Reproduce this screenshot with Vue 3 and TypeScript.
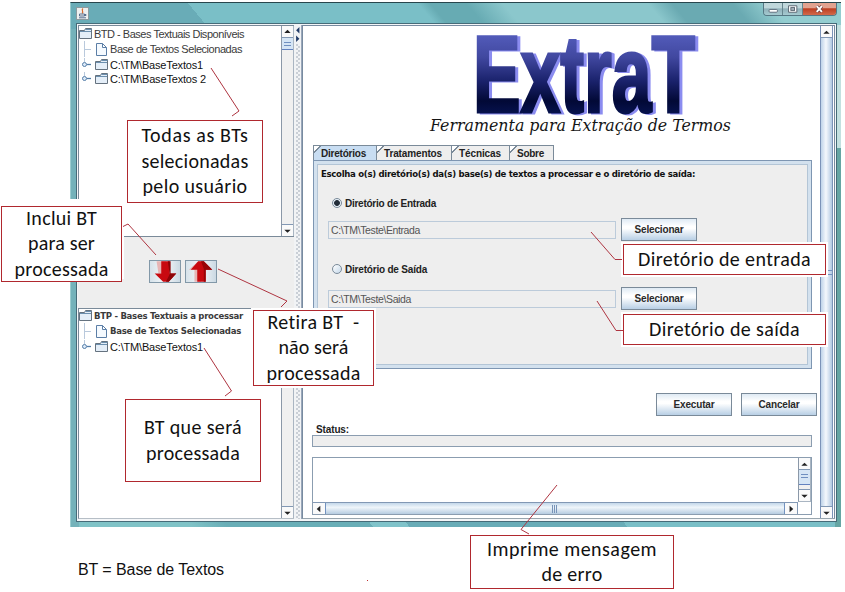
<script setup lang="ts">
interface TreeRow {
  text: string
  kind: 'root' | 'file' | 'folder'
  width: number
}
interface Callout {
  id: string
  lines: { text: string; width: number }[]
}

const available: TreeRow[] = [
  { text: 'BTD - Bases Textuais Disponíveis', kind: 'root', width: 150 },
  { text: 'Base de Textos Selecionadas', kind: 'file', width: 132 },
  { text: 'C:\\TM\\BaseTextos1', kind: 'folder', width: 93 },
  { text: 'C:\\TM\\BaseTextos 2', kind: 'folder', width: 96 },
]
const processing: TreeRow[] = [
  { text: 'BTP - Bases Textuais a processar', kind: 'root', width: 149 },
  { text: 'Base de Textos Selecionadas', kind: 'file', width: 131 },
  { text: 'C:\\TM\\BaseTextos1', kind: 'folder', width: 93 },
]
const trees = [
  { id: 'btd', rows: available },
  { id: 'btp', rows: processing },
]
const tabs = [
  { text: 'Diretórios', width: 45, id: 'dir' },
  { text: 'Tratamentos', width: 58, id: 'trat' },
  { text: 'Técnicas', width: 42, id: 'tec' },
  { text: 'Sobre', width: 27, id: 'sob' },
]
const fields = [
  { label: 'Diretório de Entrada', width: 91, value: 'C:\\TM\\Teste\\Entrada', valueWidth: 89, on: true },
  { label: 'Diretório de Saída', width: 82, value: 'C:\\TM\\Teste\\Saida', valueWidth: 80, on: false },
]
const callouts: Callout[] = [
  { id: 'all', lines: [{ text: 'Todas as BTs', width: 107 }, { text: 'selecionadas', width: 107 }, { text: 'pelo usuário', width: 105 }] },
  { id: 'include', lines: [{ text: 'Inclui BT', width: 71 }, { text: 'para ser', width: 67 }, { text: 'processada', width: 94 }] },
  { id: 'remove', lines: [{ text: 'Retira BT  -', width: 92 }, { text: 'não será', width: 70 }, { text: 'processada', width: 94 }] },
  { id: 'processed', lines: [{ text: 'BT que será', width: 98 }, { text: 'processada', width: 94 }] },
  { id: 'source', lines: [{ text: 'Diretório de entrada', width: 173 }] },
  { id: 'output', lines: [{ text: 'Diretório de saída', width: 151 }] },
  { id: 'error', lines: [{ text: 'Imprime mensagem', width: 170 }, { text: 'de erro', width: 61 }] },
]

// Tracks a label so that it fills the given width in pixels.
const vFit = {
  mounted(el: HTMLElement, binding: { value: number }) {
    const natural = el.getBoundingClientRect().width
    const count = (el.textContent ?? '').length
    el.style.letterSpacing = `${((binding.value - natural) / count).toFixed(3)}px`
  },
}
</script>

<template>
  <div class="page">
    <div class="window">
      <header class="titlebar">
        <svg class="java" viewBox="0 0 13 13">
          <rect x=".5" y=".5" width="12" height="12" fill="#eef0f0" stroke="#8b9a9e" />
          <path d="M7 1.5C4.5 3.5 8.5 4.5 6 6.5" fill="none" stroke="#d8682a" stroke-width="1.2" />
          <path d="M3.5 7h5v2h-5zM8.5 7.5h1.5v1H8M3 10.8h7" fill="none" stroke="#5a7090" />
        </svg>
        <div class="controls">
          <span class="ctl"><svg viewBox="0 0 20 12"><rect x="5.5" y="6.5" width="9" height="3" rx="1" fill="#fff" stroke="#5a6a78" /></svg></span>
          <span class="ctl"><svg viewBox="0 0 20 12"><path d="M6 2.5h9v7H6z" fill="#fff" stroke="#56626e" /><rect x="8.5" y="4.5" width="4" height="3" fill="#aab6be" stroke="#56626e" /></svg></span>
          <span class="ctl close"><svg viewBox="0 0 35 12"><path d="M14.5 3l5.5 6M20 3l-5.5 6" stroke="#704040" stroke-width="3.4" /><path d="M14.5 3l5.5 6M20 3l-5.5 6" stroke="#fff" stroke-width="2" /></svg></span>
        </div>
      </header>
      <div class="content">
        <aside class="left">
          <template v-for="tree in trees" :key="tree.id">
            <section class="treebox" :class="tree.id">
              <div class="rows">
                <div v-for="(row, i) in tree.rows" :key="i" class="row" :class="row.kind">
                  <svg v-if="row.kind === 'root'" class="icon" viewBox="0 0 14 13">
                    <path d="M.5 11.5v-8h5l1-2h6v10z" fill="#e4eef8" stroke="#65727f" /><path d="M6.5 2.5h6M1 4.5h11" stroke="#6b8fae" />
                  </svg>
                  <svg v-else-if="row.kind === 'file'" class="icon" viewBox="0 0 31 16">
                    <path d="M5.5 0v16M6 8.500h6" stroke="#b9c9dc" fill="none" /><path d="M17.500 2.500h6l4 4v8h-10zM23.500 2.500v4h4" fill="#f5faff" stroke="#5b7ea6" />
                  </svg>
                  <svg v-else class="icon" viewBox="0 0 31 14">
                    <path d="M5.500 0v4" stroke="#b9c9dc" /><circle cx="5.500" cy="6.500" r="2" fill="#dceaf8" stroke="#547da8" /><path d="M8 6.500h4" stroke="#547da8" stroke-width="1.300" />
                    <path d="M16.500 11.500v-8h5l1-2h6v10z" fill="#e4eef8" stroke="#65727f" /><path d="M22.500 2.500h6M17 4.500h11" stroke="#6b8fae" />
                  </svg>
                  <span v-fit="row.width" class="label">{{ row.text }}</span>
                </div>
              </div>
              <div class="vbar">
                <span class="cap"><svg viewBox="0 0 12 12"><path d="M2.500 7L6 3.500 9.500 7z" /></svg></span>
                <span class="grip" />
                <span class="track" />
                <span class="cap down"><svg viewBox="0 0 12 12"><path d="M2.500 4.500h7L6 8z" /></svg></span>
              </div>
            </section>
            <div v-if="tree.id === 'btd'" class="moves">
              <button class="move"><svg viewBox="0 0 32 22"><path d="M7 0h10v13h-8z" fill="#e7b5b5" /><path d="M12 0h9v13h7l-8 9h-6L5 13h7z" fill="#c80a10" /><path d="M19 0h3v13h6l-8 9h-3l4-8z" fill="#8d0508" /></svg></button>
              <button class="move"><svg viewBox="0 0 32 22"><path d="M9 22V9H3L13 0h3v22z" fill="#e7b5b5" /><path d="M12 22V9H5l8-9h6l9 9h-7v13z" fill="#c80a10" /><path d="M19 22V8l-3-8h3l9 9h-7v13z" fill="#970508" /></svg></button>
            </div>
          </template>
        </aside>
        <div class="divider">
          <svg viewBox="0 0 8 20"><path d="M5.500 2v7L2 5.500zM2 11v7l3.500-3.500z" fill="#223c68" /></svg>
          <div class="dots" />
        </div>
        <main class="right">
          <div class="scene">
            <svg class="brand" viewBox="0 0 420 119">
              <defs>
                <linearGradient id="ink" gradientUnits="userSpaceOnUse" x1="0" y1="7" x2="0" y2="87">
                  <stop offset="0" stop-color="#545dbc" /><stop offset=".3" stop-color="#4148a0" /><stop offset=".6" stop-color="#1a226c" /><stop offset=".85" stop-color="#020936" /><stop offset="1" stop-color="#06114c" />
                </linearGradient>
              </defs>
              <text class="logo" x="67" y="86" textLength="222" lengthAdjust="spacingAndGlyphs">ExtraT</text>
              <text class="tag" x="24" y="105" textLength="301" lengthAdjust="spacingAndGlyphs">Ferramenta para Extração de Termos</text>
            </svg>
            <nav class="tabs">
              <span v-for="tab in tabs" :key="tab.id" class="tab" :class="tab.id">
                <b v-fit="tab.width">{{ tab.text }}</b>
              </span>
            </nav>
            <section class="panel">
              <div class="inner">
                <p class="intro"><span v-fit="374">Escolha o(s) diretório(s) da(s) base(s) de textos a processar e o diretório de saída:</span></p>
                <div v-for="field in fields" :key="field.label" class="field">
                  <div class="choice"><i class="radio" :class="{ on: field.on }" /><b v-fit="field.width">{{ field.label }}</b></div>
                  <div class="entry">
                    <div class="input"><span v-fit="field.valueWidth">{{ field.value }}</span></div>
                    <button class="btn"><b v-fit="49">Selecionar</b></button>
                  </div>
                </div>
              </div>
            </section>
            <div class="actions">
              <button class="btn"><b v-fit="41">Executar</b></button>
              <button class="btn"><b v-fit="41">Cancelar</b></button>
            </div>
            <div class="status"><b v-fit="33">Status:</b></div>
            <div class="progress" />
            <div class="log">
              <div class="blank" />
              <div class="vbar short">
                <span class="cap"><svg viewBox="0 0 12 12"><path d="M2.500 8L6 4.500 9.500 8z" /></svg></span>
                <span class="grip" />
                <span class="track" />
                <span class="cap down"><svg viewBox="0 0 12 12"><path d="M2.500 4.500h7L6 8z" /></svg></span>
              </div>
              <div class="hbar">
                <span class="cap"><svg viewBox="0 0 12 12"><path d="M8 2.500v7L4 6z" /></svg></span>
                <span class="slide"><svg viewBox="0 0 8 8"><path d="M1.500 0v8M3.500 0v8M5.500 0v8" stroke="#7894b8" /></svg></span>
                <span class="cap"><svg viewBox="0 0 12 12"><path d="M5 2.500v7L9 6z" /></svg></span>
              </div>
            </div>
          </div>
          <div class="vbar tall">
            <span class="cap"><svg viewBox="0 0 12 12"><path d="M2.500 8L6 4.500 9.500 8z" /></svg></span>
            <span class="thumb"><i /></span>
            <span class="cap down"><svg viewBox="0 0 12 12"><path d="M2.500 4.500h7L6 8z" /></svg></span>
          </div>
        </main>
      </div>
    </div>
    <p class="note"><span v-fit="146">BT = Base de Textos</span></p>

    <div v-for="c in callouts" :key="c.id" class="callout" :class="c.id">
      <span v-for="line in c.lines" :key="line.text" v-fit="line.width">{{ line.text }}</span>
    </div>
    <svg class="leaders" viewBox="0 0 845 592">
      <g fill="none" stroke="#ae3440" stroke-width="1">
        <path d="M211 68L239 111 232 116" />
        <path d="M123 226.500L128 224 156 255" />
        <path d="M218 269L287 301 281 307" />
        <path d="M204 348L231.500 391 225 396" />
        <path d="M591 232L615 259.500H622" />
        <path d="M597 301L616 330.500H623" />
        <path d="M557 485L521 529.500 529 534" />
      </g>
      <rect x="367" y="580" width="1" height="1" fill="#c03030" />
    </svg>
  </div>
</template>

<style>
body {
  margin: 0;
  background: #fff;
}
</style>

<style scoped>
* {
  box-sizing: border-box;
}
.page {
  position: relative;
  width: 845px;
  height: 592px;
  padding: 2px 0 0 70px;
  overflow: hidden;
  background: #fff;
  font-family: "Liberation Sans", sans-serif;
  font-size: 11px;
  color: #222;
}
.page span,
.page b {
  white-space: pre;
}
button {
  padding: 0;
  font: inherit;
  color: inherit;
}
.window {
  width: 771px;
  height: 525px;
  padding: 0 4px 5px 5px;
  display: flex;
  flex-direction: column;
  border-top: 1px solid #28464d;
  border-left: 1px solid #9ccdd0;
  background:
    linear-gradient(180deg, transparent 145px, #65a5a3 145px) right top / 6px 100% no-repeat,
    linear-gradient(180deg, #c3e0e0, #c3e0e0) right 22px / 6px 100% no-repeat,
    linear-gradient(#74b2ba, #74b2ba) left 26px / 8px 100% no-repeat,
    linear-gradient(50deg, #80c3c7 0 10%, #69aeb7 13% 25%, #80c3ca 25% 28%, #69acb7 28% 46%, #7abfc7 46% 65%, #67abb3 66% 69%, #8bc7cc 72% 84%, #6aaab2 86% 91%, #93cdd0 94%);
}
.titlebar {
  height: 20px;
  display: flex;
  justify-content: space-between;
}
.java {
  width: 13px;
  height: 13px;
  margin-top: 4px;
}
.controls {
  width: 74px;
  height: 13px;
  display: flex;
  border: 1px solid #557783;
  border-top: 0;
  border-radius: 0 0 4px 4px;
  overflow: hidden;
}
.ctl {
  width: 20px;
  border-right: 1px solid #65858d;
  background: linear-gradient(#bfd7db 0 42%, #8fb0b9 48%, #a5cad0);
}
.ctl svg {
  display: block;
  width: 100%;
  height: 12px;
}
.close {
  width: 34px;
  border: 0;
  background: linear-gradient(#e2a28f 0 40%, #bc3f22 48%, #d2694a);
}
.content {
  flex: 1;
  min-height: 0;
  display: flex;
  padding: 1px 1px 2px;
  border: 1px solid #466b78;
  background: #f4f6f8;
}
.left {
  width: 216px;
  display: flex;
  flex-direction: column;
  background: #eee;
}
.treebox {
  display: flex;
  justify-content: space-between;
  background: #fff;
  border: 1px solid #7a8a99;
  border-right: 0;
}
.btd {
  height: 212px;
}
.btp {
  flex: 1;
  border-bottom-color: #b6bec6;
}
.btp .rows {
  margin-top: -1px;
}
.row {
  height: 15px;
  display: flex;
  align-items: center;
  color: #3b3b3b;
}
.row .icon {
  flex: none;
  width: 31px;
  height: 16px;
}
.root .icon {
  width: 14px;
  height: 13px;
  margin-right: 1px;
}
.folder {
  color: #111;
}
.folder .icon {
  height: 14px;
}
.btd .folder {
  height: 14px;
}
.btd .folder:nth-child(3) {
  margin-top: 2px;
}
.btp .folder {
  margin-top: 1px;
}
.btp .root .label,
.btp .file .label {
  font-family: "DejaVu Sans Condensed", "DejaVu Sans", sans-serif;
  font-stretch: condensed;
  font-weight: bold;
  font-size: 9.5px;
}
.vbar {
  width: 13px;
  display: flex;
  flex-direction: column;
  border-left: 1px solid #8b98a8;
  border-right: 1px solid #a9b5c2;
  background: #f0f0f0;
}
.cap {
  flex: none;
  height: 12px;
  background: #fafafa;
  border-bottom: 1px solid #8298b4;
}
.cap svg {
  display: block;
  width: 11px;
  height: 12px;
  fill: #222;
}
.cap.down {
  border-bottom: 0;
  border-top: 1px solid #8298b4;
}
.grip {
  height: 12px;
  border-bottom: 1px solid #6382bf;
  background:
    linear-gradient(#6f8fc0, #6f8fc0) center 4px / 7px 1px no-repeat,
    linear-gradient(#6f8fc0, #6f8fc0) center 7px / 7px 1px no-repeat,
    #d5e5f5;
}
.btp .grip {
  display: none;
}
.track {
  flex: 1;
}
.moves {
  height: 71px;
  padding: 23px 0 0 71px;
  display: flex;
  gap: 4px;
}
.move {
  width: 32px;
  height: 23px;
  border: 1px solid #8298a8;
  background: linear-gradient(90deg, #d6e2ea, #f5f8fa 50%, #cbd9e3);
}
.move svg {
  display: block;
  width: 30px;
  height: 21px;
}
.divider {
  width: 8px;
  display: flex;
  flex-direction: column;
  border-right: 1px solid #9aa7ba;
  background: #f1f3f5;
}
.divider svg {
  height: 19px;
  width: 8px;
}
.dots {
  flex: 1;
  margin: 0 1px 0 2px;
  background:
    radial-gradient(circle at 1px 1px, #b4bbc6 0.6px, transparent 0.9px) 0 0 / 4px 4px,
    radial-gradient(circle at 3px 3px, #b4bbc6 0.6px, transparent 0.9px) 0 0 / 4px 4px;
}
.right {
  flex: 1;
  display: flex;
  justify-content: space-between;
  padding-right: 1px;
  border: 1px solid #788ba0;
  border-bottom-color: #98a5ae;
  background: #fff;
}
.scene {
  width: 510px;
  padding-left: 10px;
  display: flex;
  flex-direction: column;
}
.brand {
  flex: none;
  width: 420px;
  height: 119px;
  margin-left: 93px;
  overflow: visible;
}
.logo {
  font: bold 109px "Liberation Sans", sans-serif;
  fill: url(#ink);
  stroke: url(#ink);
  stroke-width: 3px;
  filter: drop-shadow(3px 1px 0 #8b8cf0);
}
.tag {
  font: italic 17px "DejaVu Serif Condensed", "DejaVu Serif", serif;
  fill: #151515;
}
.tabs {
  display: flex;
  height: 15px;
  flex: none;
}
.tab {
  height: 15px;
  padding-left: 7px;
  line-height: 16px;
  font-size: 10px;
  border: 1px solid #7a8a99;
  border-left: 0;
  border-bottom: 0;
  background: linear-gradient(135deg, #fff 0 4px, #7a8a99 4px 5px, #eee 5px);
}
.dir {
  width: 64px;
  padding-left: 7px;
  border-left: 1px solid #7a8a99;
  background: linear-gradient(135deg, #fff 0 4px, #7a8a99 4px 5px, #c8ddf2 5px);
}
.trat {
  width: 75px;
}
.tec {
  width: 58px;
}
.sob {
  width: 44px;
}
.panel {
  flex: none;
  width: 499px;
  height: 209px;
  padding: 3px;
  border: 1px solid #7e96b2;
  background: #d3e1ee;
}
.inner {
  height: 100%;
  border: 1px solid #b3c5d6;
  background: #eee;
}
.intro {
  height: 18px;
  margin: 0 0 0 3px;
  font: bold 9.500px/18px "DejaVu Sans Condensed", "DejaVu Sans", sans-serif;
  font-stretch: condensed;
  color: #111;
}
.field {
  height: 69px;
  padding: 12px 0 0 10px;
}
.field + .field {
  padding-top: 9px;
}
.field + .field .entry {
  padding-top: 10px;
}
.choice {
  height: 16px;
  display: flex;
  align-items: center;
  gap: 3px;
  padding-left: 4px;
  font-size: 10px;
}
.radio {
  width: 10px;
  height: 10px;
  border: 1px solid #7a8a99;
  border-radius: 50%;
  background: linear-gradient(135deg, #fff, #c5d8ea);
}
.radio.on {
  background: radial-gradient(circle, #222c38 0 2.500px, #e8f0f8 3.300px);
}
.entry {
  display: flex;
  align-items: center;
  gap: 5px;
  padding-top: 7px;
}
.input {
  width: 288px;
  height: 18px;
  padding-left: 2px;
  line-height: 16px;
  border: 1px solid #bccbda;
  font-size: 10.500px;
  color: #555;
}
.btn {
  flex: none;
  width: 76px;
  height: 23px;
  border: 1px solid #7a8a99;
  background: linear-gradient(#dfeaf4, #fff 35%, #fff 45%, #b8cfe5);
  color: #2a2a2a;
  font-size: 10px;
}
.actions {
  flex: none;
  display: flex;
  gap: 9px;
  padding: 24px 0 0 343px;
  height: 52px;
}
.status {
  height: 14px;
  flex: none;
  padding: 3px 0 0 3px;
  font-size: 10px;
  line-height: 11px;
}
.progress {
  flex: none;
  width: 500px;
  height: 12px;
  margin-left: -1px;
  border: 1px solid #8b9db0;
  background: #eee;
}
.log {
  flex: none;
  width: 500px;
  height: 58px;
  margin: 10px 0 0 -1px;
  display: grid;
  grid-template-columns: 1fr 13px;
  grid-template-rows: 44px 12px;
  border: 1px solid #8b9db0;
  background: #fff;
}
.short .grip {
  height: 15px;
}
.short {
  border-bottom: 1px solid #a9b5c2;
}
.hbar {
  display: flex;
  border-top: 1px solid #8298b4;
  border-right: 1px solid #8298b4;
}
.hbar .cap {
  width: 12px;
  height: 11px;
  border: 0;
}
.slide {
  flex: 1;
  display: flex;
  justify-content: center;
  align-items: center;
  border: solid #7292c0;
  border-width: 0 1px;
  background: linear-gradient(#c4d8ea, #eff5fa 40%, #b6cce1);
}
.slide svg {
  width: 8px;
  height: 8px;
}
.tall {
  border-color: #7b93b8;
}
.thumb {
  flex: 1;
  display: flex;
  align-items: center;
  background: linear-gradient(90deg, #bed3e9, #f4f8fc 45%, #b2c9e2);
}
.thumb i {
  width: 11px;
  height: 5px;
  border: solid #7292c0;
  border-width: 1px 0;
}
.note {
  margin: 34px 0 0 8px;
  font-size: 16px;
  line-height: 18px;
  color: #111;
}
.callout {
  position: absolute;
  display: flex;
  flex-direction: column;
  align-items: center;
  justify-content: center;
  border: 1px solid #b0282e;
  background: #fff;
  box-shadow: 0 0 0 2px #fff;
  font-family: Carlito, Calibri, "Open Sans", sans-serif;
  font-size: 20px;
  line-height: 25.500px;
  color: #111;
}
.all {
  left: 127px;
  top: 120px;
  width: 136px;
  height: 83px;
}
.include {
  left: 1px;
  top: 206px;
  width: 121px;
  height: 76px;
  box-shadow: 0 -5px 0 2px #fff;
}
.remove {
  left: 253px;
  top: 310px;
  width: 121px;
  height: 76px;
}
.processed {
  left: 125px;
  top: 399px;
  width: 136px;
  height: 83px;
}
.source,
.output {
  left: 623px;
  top: 244px;
  width: 203px;
  height: 31px;
}
.output {
  top: 314px;
}
.error {
  left: 470px;
  top: 535px;
  width: 204px;
  height: 54px;
}
.leaders {
  position: absolute;
  left: 0;
  top: 0;
  width: 845px;
  height: 592px;
  pointer-events: none;
}
</style>
